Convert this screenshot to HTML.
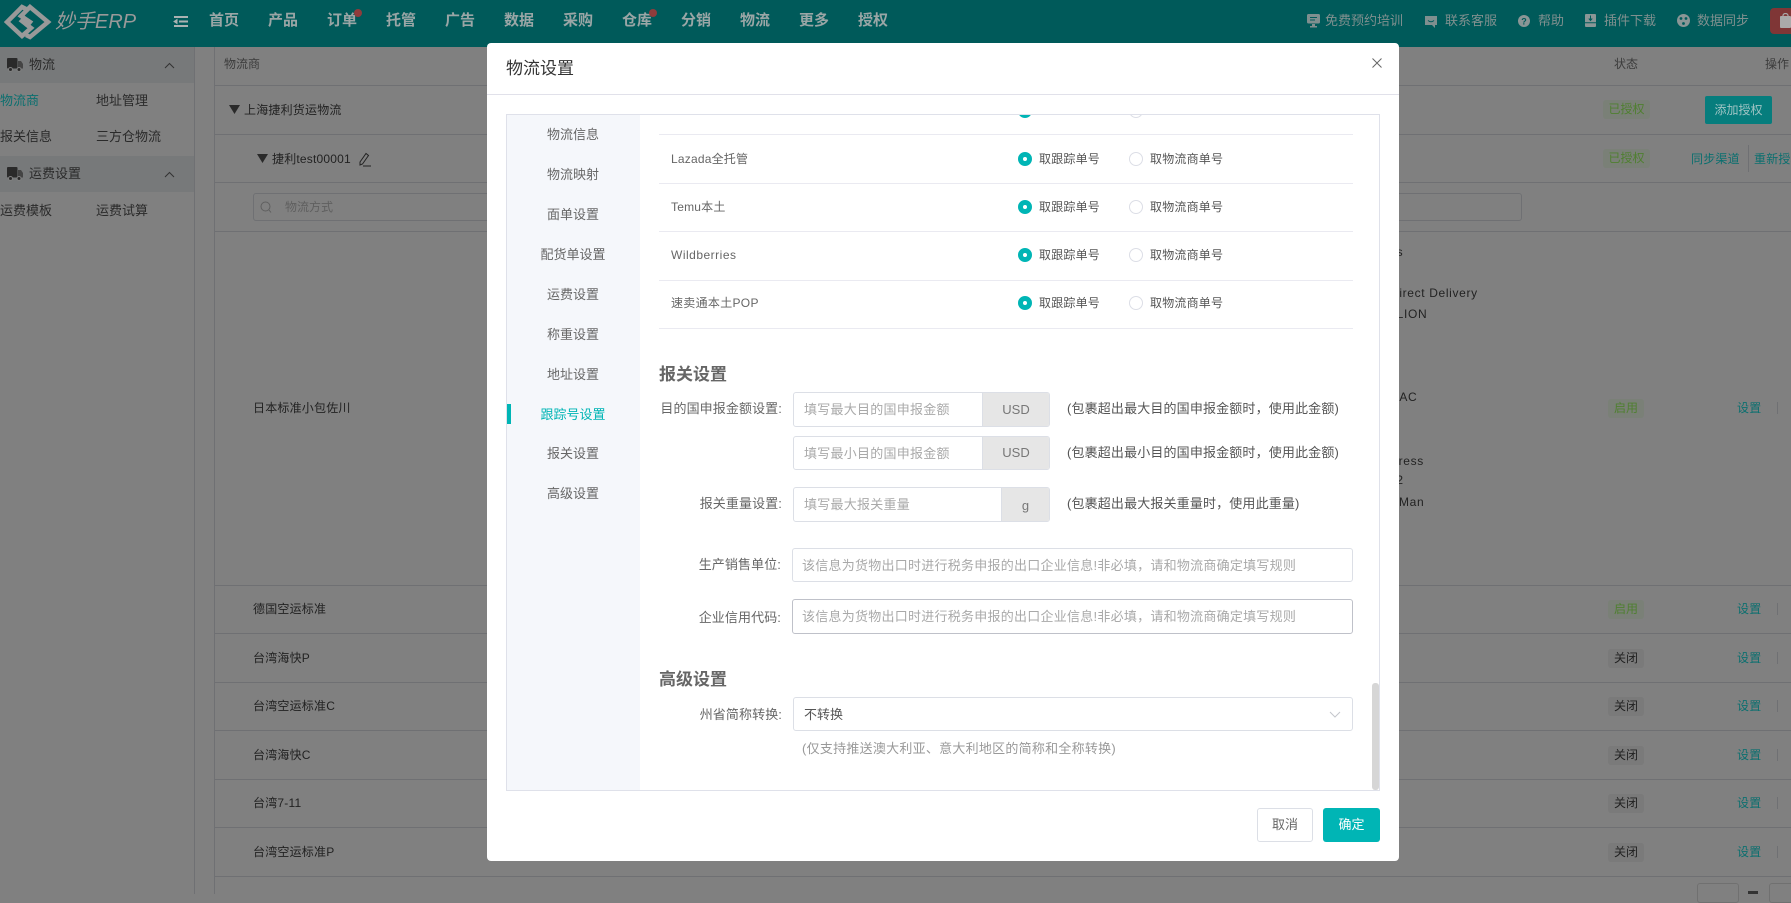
<!DOCTYPE html>
<html lang="zh"><head><meta charset="utf-8"><title>物流设置</title>
<style>
*{box-sizing:border-box}
html,body{margin:0;padding:0;width:1791px;height:894px;overflow:hidden;background:#808080;font-family:"Liberation Sans","Noto Sans CJK SC",sans-serif;font-size:12px}
.t{position:absolute;white-space:nowrap;height:20px;line-height:20px}
.a{position:absolute}
.n{color:#9aa6a6;font-size:15px;font-weight:700}
.r{color:#80908f;font-size:13px}
.s{color:#2a2a2a;font-size:13px}
.d{color:#222;font-size:12px;letter-spacing:.2px}
.e{letter-spacing:.65px}
.h{position:absolute;height:1px;background:#6f7073}
.v{position:absolute;width:1px;background:#6f7073}
.g{position:absolute;height:19px;line-height:19px;text-align:center;border-radius:3px;font-size:12px}
.on{background:#7a8077;color:#4f7f30}
.off{background:#7a7a7a;color:#222}
.l{color:#0b6f6f;font-size:12px;letter-spacing:.2px}
#m{position:absolute;left:487px;top:43px;width:912px;height:818px;background:#fff;border-radius:4px;overflow:hidden}
#m .t{color:#666}
.nv{width:134px;left:19px;text-align:center;font-size:13px}
.ln{position:absolute;left:172px;width:694px;height:1px;background:#eaeaf1}
.ra{position:absolute;width:14px;height:14px;border-radius:50%;border:5px solid #00b5b5;background:#fff}
.rb{position:absolute;width:14px;height:14px;border-radius:50%;border:1px solid #dcdee6;background:#fff}
.inp{position:absolute;border:1px solid #dcdfe6;border-radius:3px;background:#fff;overflow:hidden}
.add{position:absolute;right:0;top:0;bottom:0;background:#e6e6e6;text-align:center;color:#777;font-size:13px;border-left:1px solid #dcdfe6}
#m .ph{color:#a9a9a9;font-size:13px;letter-spacing:.25px}
#m .f{font-size:13px;letter-spacing:.1px;color:#666}
#m .hd{font-size:17px;font-weight:700;color:#666}
#m .tx{font-size:13px;letter-spacing:.15px;color:#555}
</style></head><body>

<div class="a" style="left:0;top:0;width:1791px;height:47px;background:#005a5a"></div>
<svg class="a" style="left:4px;top:4px" width="48" height="36" viewBox="4 4 48 36" fill="none" stroke="#999" stroke-width="4.5">
<path d="M26 9 L22 7 L7 22 L22 36 L31 28 L22 21 L26 17"/><path d="M26 35 L30 37 L48 22 L30 7 L21 16 L30 22 L26 27"/></svg>
<div class="t" style="left:55px;top:7px;height:30px;line-height:30px;font-size:20px;font-style:italic;color:#999">妙手ERP</div>
<svg class="a" style="left:173px;top:15px" width="16" height="13" fill="none" stroke="#aab2b2" stroke-width="2"><path d="M1 2H15M6 6.500H15M1 11H15"/><path d="M1 6.500L4 4.500V8.500Z" stroke-width="1" fill="#aab2b2"/></svg>
<div class="t n" style="left:209px;top:11px">首页</div>
<div class="t n" style="left:268px;top:11px">产品</div>
<div class="t n" style="left:327px;top:11px">订单</div>
<div class="t n" style="left:386px;top:11px">托管</div>
<div class="t n" style="left:445px;top:11px">广告</div>
<div class="t n" style="left:504px;top:11px">数据</div>
<div class="t n" style="left:563px;top:11px">采购</div>
<div class="t n" style="left:622px;top:11px">仓库</div>
<div class="t n" style="left:681px;top:11px">分销</div>
<div class="t n" style="left:740px;top:11px">物流</div>
<div class="t n" style="left:799px;top:11px">更多</div>
<div class="t n" style="left:858px;top:11px">授权</div>
<div class="a" style="left:354px;top:9px;width:8px;height:8px;border-radius:50%;background:#8f3c3c"></div>
<div class="a" style="left:649px;top:9px;width:8px;height:8px;border-radius:50%;background:#8f3c3c"></div>

<svg class="a" style="left:1307px;top:14px" width="13" height="14" fill="#7f8f8f"><rect width="13" height="9.500" rx="1.500"/><path d="M3 3.500H10M3 6H8" stroke="#005a5a"/><rect x="5" y="10" width="3" height="2"/><rect x="3" y="12" width="7" height="1.500"/></svg>
<div class="t r" style="left:1325px;top:11px">免费预约培训</div>
<svg class="a" style="left:1424px;top:15px" width="14" height="14" fill="#7f8f8f"><path d="M1 1H13V10H11V13L8 10H1Z"/><path d="M4 5.500Q7 8 10 5.500" stroke="#005a5a" fill="none"/></svg>
<div class="t r" style="left:1445px;top:11px">联系客服</div>
<svg class="a" style="left:1518px;top:15px" width="12" height="12"><circle cx="6" cy="6" r="6" fill="#8a9696"/><text x="6" y="9.500" font-size="9" font-weight="700" text-anchor="middle" fill="#005a5a" font-family="Liberation Sans">?</text></svg>
<div class="t r" style="left:1538px;top:11px">帮助</div>
<svg class="a" style="left:1585px;top:14px" width="11" height="13" fill="#8a9696"><rect width="11" height="13" rx="1"/><path d="M5.500 1.500V6M3.800 4.500L5.500 6.500L7.200 4.500M0 8.800H11" stroke="#005a5a" fill="none"/></svg>
<div class="t r" style="left:1604px;top:11px">插件下载</div>
<svg class="a" style="left:1677px;top:14px" width="13" height="13"><circle cx="6.500" cy="6.500" r="6.500" fill="#8a9696"/><circle cx="4" cy="4.500" r="1.400" fill="#005a5a"/><circle cx="9" cy="4.500" r="1.400" fill="#005a5a"/><circle cx="6.500" cy="9.500" r="1.400" fill="#005a5a"/></svg>
<div class="t r" style="left:1697px;top:11px">数据同步</div>
<div class="a" style="left:1770px;top:8px;width:30px;height:26px;background:#7f3636;border-radius:4px"></div>
<svg class="a" style="left:1780px;top:13px" width="11" height="15" fill="#aaa"><rect x="0" y="3" width="11" height="12" rx="1"/><path d="M3 4V2.500a2.500 2 0 0 1 5 0V4" fill="none" stroke="#aaa" stroke-width="1.200"/></svg>

<!-- sidebar -->
<div class="a" style="left:0;top:47px;width:194px;height:36px;background:#77797a"></div>
<div class="a" style="left:0;top:156px;width:194px;height:36px;background:#77797a"></div>
<svg class="a" style="left:7px;top:58px" width="16" height="14" fill="#2a2a2a"><rect width="10.500" height="10.500" rx="1"/><path d="M11 3H14L16 6V10.500H11Z" fill="#444"/><circle cx="3.500" cy="11.500" r="2" stroke="#808080"/><circle cx="12" cy="11.500" r="2" stroke="#808080"/></svg>
<svg class="a" style="left:7px;top:167px" width="16" height="14" fill="#2a2a2a"><rect width="10.500" height="10.500" rx="1"/><path d="M11 3H14L16 6V10.500H11Z" fill="#444"/><circle cx="3.500" cy="11.500" r="2" stroke="#808080"/><circle cx="12" cy="11.500" r="2" stroke="#808080"/></svg>
<div class="t s" style="left:29px;top:55px">物流</div>
<div class="t s" style="left:29px;top:164px">运费设置</div>
<svg class="a" style="left:164px;top:62px" width="11" height="7" fill="none" stroke="#333"><path d="M1 6L5.500 1.500L10 6"/></svg>
<svg class="a" style="left:164px;top:171px" width="11" height="7" fill="none" stroke="#333"><path d="M1 6L5.500 1.500L10 6"/></svg>
<div class="t s" style="left:0;top:91px;color:#0b6f6f">物流商</div>
<div class="t s" style="left:96px;top:91px">地址管理</div>
<div class="t s" style="left:0;top:127px">报关信息</div>
<div class="t s" style="left:96px;top:127px">三方仓物流</div>
<div class="t s" style="left:0;top:201px">运费模板</div>
<div class="t s" style="left:96px;top:201px">运费试算</div>

<!-- table -->
<div class="v" style="left:194px;top:47px;height:847px"></div>
<div class="v" style="left:214px;top:47px;height:847px"></div>
<div class="t" style="left:224px;top:54px;font-size:12px;color:#3c3c3c">物流商</div>
<div class="t" style="left:1614px;top:54px;font-size:12px;color:#3c3c3c">状态</div>
<div class="t" style="left:1765px;top:54px;font-size:12px;color:#3c3c3c">操作</div>
<div class="h" style="left:215px;top:85px;width:1576px"></div>
<div class="h" style="left:215px;top:134px;width:1576px"></div>
<div class="h" style="left:215px;top:182px;width:1576px"></div>
<div class="h" style="left:215px;top:231px;width:1576px"></div>
<div class="h" style="left:215px;top:585px;width:1576px"></div>
<div class="h" style="left:215px;top:633px;width:1576px"></div>
<div class="h" style="left:215px;top:682px;width:1576px"></div>
<div class="h" style="left:215px;top:730px;width:1576px"></div>
<div class="h" style="left:215px;top:779px;width:1576px"></div>
<div class="h" style="left:215px;top:827px;width:1576px"></div>
<div class="h" style="left:215px;top:876px;width:1576px"></div>
<svg class="a" style="left:229px;top:105px" width="11" height="9" fill="#2a2a2a"><path d="M0 0H11L5.500 9Z"/></svg>
<div class="t d" style="left:244px;top:100px">上海捷利货运物流</div>
<svg class="a" style="left:257px;top:154px" width="11" height="9" fill="#2a2a2a"><path d="M0 0H11L5.500 9Z"/></svg>
<div class="t d" style="left:272px;top:149px">捷利test00001</div>
<svg class="a" style="left:358px;top:152px" width="13" height="15" fill="none" stroke="#222"><path d="M2 10L8 1.500L10.500 3.500L4.500 12L2 13Z"/><path d="M5 14H13"/></svg>
<div class="g on" style="left:1603px;top:100px;width:47px">已授权</div>
<div class="g on" style="left:1603px;top:149px;width:47px">已授权</div>
<div class="a" style="left:1705px;top:96px;width:67px;height:28px;line-height:28px;text-align:center;background:#067d7d;border-radius:2px;color:#9fc4c4;font-size:12px">添加授权</div>
<div class="t l" style="left:1691px;top:149px">同步渠道</div>
<div class="v" style="left:1748px;top:145px;height:27px"></div>
<div class="t l" style="left:1754px;top:149px">重新授权</div>
<div class="a" style="left:253px;top:193px;width:1269px;height:28px;border:1px solid #6f7073;border-radius:3px"></div>
<svg class="a" style="left:260px;top:201px" width="12" height="13" fill="none" stroke="#5f5f5f"><circle cx="5.500" cy="5.500" r="4.500"/><path d="M9 9L11 11.500"/></svg>
<div class="t" style="left:285px;top:197px;font-size:12px;color:#5f5f5f">物流方式</div>
<div class="t d" style="left:253px;top:398px">日本标准小包佐川</div>
<div class="t d" style="left:253px;top:599px">德国空运标准</div>
<div class="t d" style="left:253px;top:648px">台湾海快P</div>
<div class="t d" style="left:253px;top:696px">台湾空运标准C</div>
<div class="t d" style="left:253px;top:745px">台湾海快C</div>
<div class="t d" style="left:253px;top:793px">台湾7-11</div>
<div class="t d" style="left:253px;top:842px">台湾空运标准P</div>
<div class="t d e" style="left:1390px;top:242px">ss</div>
<div class="t d e" style="left:1390px;top:283px">Direct Delivery</div>
<div class="t d e" style="left:1388px;top:304px">ELION</div>
<div class="t d e" style="left:1392px;top:387px">LAC</div>
<div class="t d e" style="left:1376px;top:451px">Express</div>
<div class="t d e" style="left:1389px;top:470px">12</div>
<div class="t d e" style="left:1399px;top:492px">Man</div>
<div class="g on" style="left:1608px;top:399px;width:36px">启用</div>
<div class="g on" style="left:1608px;top:600px;width:36px">启用</div>
<div class="g off" style="left:1608px;top:649px;width:36px">关闭</div>
<div class="g off" style="left:1608px;top:697px;width:36px">关闭</div>
<div class="g off" style="left:1608px;top:746px;width:36px">关闭</div>
<div class="g off" style="left:1608px;top:794px;width:36px">关闭</div>
<div class="g off" style="left:1608px;top:843px;width:36px">关闭</div>
<div class="t l" style="left:1737px;top:398px">设置</div>
<div class="t l" style="left:1737px;top:599px">设置</div>
<div class="t l" style="left:1737px;top:648px">设置</div>
<div class="t l" style="left:1737px;top:696px">设置</div>
<div class="t l" style="left:1737px;top:745px">设置</div>
<div class="t l" style="left:1737px;top:793px">设置</div>
<div class="t l" style="left:1737px;top:842px">设置</div>
<div class="v" style="left:1777px;top:402px;height:12px"></div>
<div class="v" style="left:1777px;top:603px;height:12px"></div>
<div class="v" style="left:1777px;top:652px;height:12px"></div>
<div class="v" style="left:1777px;top:700px;height:12px"></div>
<div class="v" style="left:1777px;top:749px;height:12px"></div>
<div class="v" style="left:1777px;top:797px;height:12px"></div>
<div class="v" style="left:1777px;top:846px;height:12px"></div>
<div class="a" style="left:1697px;top:883px;width:42px;height:20px;border:1px solid #707070;border-radius:3px"></div>
<div class="a" style="left:1769px;top:883px;width:42px;height:20px;border:1px solid #707070;border-radius:3px"></div>
<div class="a" style="left:1748px;top:891px;width:10px;height:3px;background:#333"></div>

<!-- modal -->
<div id="m">
<div class="t" style="left:19px;top:16px;font-size:17px;color:#333">物流设置</div>
<svg class="a" style="left:885px;top:15px" width="10" height="10" stroke="#666" fill="none"><path d="M.5.500L9.500 9.500M9.500.500L.5 9.500"/></svg>
<div class="a" style="left:0;top:51px;width:912px;height:1px;background:#e1e1ea"></div>

<div class="a" style="left:19px;top:71px;width:874px;height:677px;border:1px solid #dfe1ea;overflow:hidden"></div>
<div class="a" style="left:20px;top:72px;width:133px;height:675px;background:#f5f7fb"></div>
<div class="t nv" style="top:82px">物流信息</div>
<div class="t nv" style="top:122px">物流映射</div>
<div class="t nv" style="top:162px">面单设置</div>
<div class="t nv" style="top:202px">配货单设置</div>
<div class="t nv" style="top:242px">运费设置</div>
<div class="t nv" style="top:282px">称重设置</div>
<div class="t nv" style="top:322px">地址设置</div>
<div class="t nv" style="top:362px;color:#00b5b5">跟踪号设置</div>
<div class="t nv" style="top:401px">报关设置</div>
<div class="t nv" style="top:441px">高级设置</div>
<div class="a" style="left:20px;top:361px;width:4px;height:20px;background:#00b5b5"></div>

<div class="a" style="left:531px;top:72px;width:14px;height:3px;overflow:hidden"><div class="ra" style="left:0;top:-11px"></div></div>
<div class="a" style="left:642px;top:72px;width:14px;height:3px;overflow:hidden"><div class="rb" style="left:0;top:-11px"></div></div>
<div class="ln" style="top:91px"></div>
<div class="ln" style="top:140px"></div>
<div class="ln" style="top:188px"></div>
<div class="ln" style="top:237px"></div>
<div class="ln" style="top:285px"></div>

<div class="t" style="left:184px;top:106px;font-size:12px;letter-spacing:.2px">Lazada全托管</div>
<div class="ra" style="left:531px;top:109px"></div><div class="t d" style="left:552px;top:106px;color:#555">取跟踪单号</div>
<div class="rb" style="left:642px;top:109px"></div><div class="t d" style="left:663px;top:106px;color:#555">取物流商单号</div>
<div class="t" style="left:184px;top:154px;font-size:12px;letter-spacing:.2px">Temu本土</div>
<div class="ra" style="left:531px;top:157px"></div><div class="t d" style="left:552px;top:154px;color:#555">取跟踪单号</div>
<div class="rb" style="left:642px;top:157px"></div><div class="t d" style="left:663px;top:154px;color:#555">取物流商单号</div>
<div class="t" style="left:184px;top:202px;font-size:12px;letter-spacing:.5px">Wildberries</div>
<div class="ra" style="left:531px;top:205px"></div><div class="t d" style="left:552px;top:202px;color:#555">取跟踪单号</div>
<div class="rb" style="left:642px;top:205px"></div><div class="t d" style="left:663px;top:202px;color:#555">取物流商单号</div>
<div class="t" style="left:184px;top:250px;font-size:12px;letter-spacing:.3px">速卖通本土POP</div>
<div class="ra" style="left:531px;top:253px"></div><div class="t d" style="left:552px;top:250px;color:#555">取跟踪单号</div>
<div class="rb" style="left:642px;top:253px"></div><div class="t d" style="left:663px;top:250px;color:#555">取物流商单号</div>

<div class="t hd" style="left:172px;top:322px">报关设置</div>
<div class="t f" style="right:617px;top:356px">目的国申报金额设置:</div>
<div class="inp" style="left:306px;top:349px;width:257px;height:35px"><div class="add" style="width:67px;line-height:33px">USD</div></div>
<div class="t ph" style="left:317px;top:357px">填写最大目的国申报金额</div>
<div class="t tx" style="left:580px;top:356px">(包裹超出最大目的国申报金额时，使用此金额)</div>
<div class="inp" style="left:306px;top:393px;width:257px;height:34px"><div class="add" style="width:67px;line-height:32px">USD</div></div>
<div class="t ph" style="left:317px;top:401px">填写最小目的国申报金额</div>
<div class="t tx" style="left:580px;top:400px">(包裹超出最小目的国申报金额时，使用此金额)</div>
<div class="t f" style="right:617px;top:451px">报关重量设置:</div>
<div class="inp" style="left:306px;top:444px;width:257px;height:35px"><div class="add" style="width:48px;line-height:35px">g</div></div>
<div class="t ph" style="left:317px;top:452px">填写最大报关重量</div>
<div class="t tx" style="left:580px;top:451px">(包裹超出最大报关重量时，使用此重量)</div>
<div class="t f" style="right:618px;top:512px">生产销售单位:</div>
<div class="inp" style="left:305px;top:505px;width:561px;height:34px"></div>
<div class="t ph" style="left:315px;top:513px">该信息为货物出口时进行税务申报的出口企业信息!非必填，请和物流商确定填写规则</div>
<div class="t f" style="right:618px;top:565px">企业信用代码:</div>
<div class="inp" style="left:305px;top:556px;width:561px;height:35px;border-color:#bfc1c9"></div>
<div class="t ph" style="left:315px;top:564px">该信息为货物出口时进行税务申报的出口企业信息!非必填，请和物流商确定填写规则</div>

<div class="t hd" style="left:172px;top:627px">高级设置</div>
<div class="t f" style="right:617px;top:662px">州省简称转换:</div>
<div class="inp" style="left:306px;top:654px;width:560px;height:34px"></div>
<div class="t" style="left:317px;top:662px;font-size:13px;color:#555">不转换</div>
<svg class="a" style="left:842px;top:668px" width="12" height="7" fill="none" stroke="#c4c6cc"><path d="M1 1L6 6L11 1"/></svg>
<div class="t" style="left:315px;top:696px;font-size:13px;letter-spacing:.25px;color:#999">(仅支持推送澳大利亚、意大利地区的简称和全称转换)</div>
<div class="a" style="left:885px;top:640px;width:7px;height:107px;background:#d6d6d6;border-radius:3px"></div>

<div class="a" style="left:770px;top:765px;width:56px;height:34px;line-height:32px;text-align:center;border:1px solid #dcdfe6;border-radius:3px;font-size:13px;color:#666">取消</div>
<div class="a" style="left:836px;top:765px;width:57px;height:34px;line-height:34px;text-align:center;background:#00b5b5;border-radius:3px;font-size:13px;color:#fff">确定</div>
</div>
</body></html>
